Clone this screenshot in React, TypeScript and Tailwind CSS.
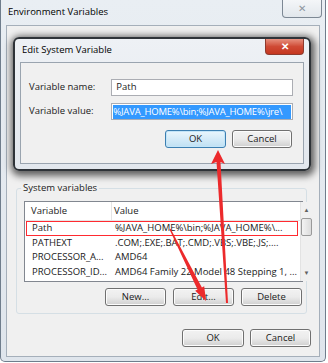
import React from "react";

const font = { fontFamily: '"Open Sans", "Noto Sans", Arial, sans-serif' };

const WinButton = ({ label, focused = false, w = "w-[61px]" }: { label: string; focused?: boolean; w?: string }) => (
  <div
    className={`${w} h-[18px] rounded-[3px] border flex items-center justify-center text-[9.5px] text-[#1a1a1a] ${
      focused
        ? "border-[#3c7fb1] bg-gradient-to-b from-[#eaf6fd] to-[#bfe0f3] shadow-[inset_0_0_0_1px_#c3e5f8]"
        : "border-[#707070] bg-gradient-to-b from-[#f2f2f2] via-[#ebebeb] to-[#cfcfcf] shadow-[inset_0_0_0_1px_#fcfcfc]"
    }`}
  >
    {label}
  </div>
);

const rows = [
  { name: "Path", value: "%JAVA_HOME%\\bin;%JAVA_HOME%\\...", marked: true },
  { name: "PATHEXT", value: ".COM;.EXE;.BAT;.CMD;.VBS;.VBE;.JS;...." },
  { name: "PROCESSOR_A...", value: "AMD64" },
  { name: "PROCESSOR_ID...", value: "AMD64 Family 22 Model 48 Stepping 1, ..." },
];

const Arrows = () => (
  <svg className="absolute inset-0 pointer-events-none" width="328" height="363" viewBox="0 0 328 363">
    {/* up arrow to the OK button */}
    <polygon points="218,150 225,164 220.5,162 228,303 226,303 216.5,162 211,164" fill="#ec2a2c" />
    {/* diagonal arrow to Edit... */}
    <polygon
      points="170.6,228.7 201.9,287.4 204.2,286.3 206,301 195.2,290.7 197.5,289.6 169.4,229.3"
      fill="#ec2a2c"
    />
  </svg>
);

export default function App() {
  return (
    <div className="relative w-[328px] h-[363px] overflow-hidden bg-white" style={font}>
      {/* Environment Variables window */}
      <div className="relative w-[326px] h-[362px] border-l border-r border-b border-[#6f7d8c] rounded-b-[5px] bg-gradient-to-b from-[#e9eef3] to-[#dfe5ec] flex flex-col px-[5px] pb-[4px]">
        <div className="h-[25px] flex items-center pl-[2px] text-[9.5px] text-black">Environment Variables</div>
        <div className="absolute top-0 right-[3px] w-[40px] h-[18px] border border-t-0 border-[#7d8894] rounded-b-[4px] bg-gradient-to-b from-[#f4f6f8] to-[#e2e7ec] flex items-center justify-center text-[10px] text-[#8d96a0]">
          ✕
        </div>

        <div className="flex-1 border border-[#a5afba] bg-[#f0f0f0] flex flex-col">
          {/* System variables group */}
          <div className="relative mt-[162px] ml-[9px] w-[291px] h-[126px] border border-[#d5dfe5] rounded-[3px] pt-[12px] pl-[7px]">
            <div className="absolute top-[-8px] left-[4px] bg-[#f0f0f0] px-[2px] text-[9.5px] text-[#1a1a1a] leading-[14px]">
              System variables
            </div>
            <div className="w-[279px] h-[81px] border border-[#828790] bg-white flex">
              <div className="flex-1 flex flex-col text-[9.5px] text-[#1a1a1a]">
                <div className="h-[19px] flex items-center border-b border-[#e5e5e5] shrink-0">
                  <div className="w-[87px] pl-[6px] border-r border-[#e5e5e5] h-full flex items-center">Variable</div>
                  <div className="pl-[2px]">Value</div>
                </div>
                {rows.map((r) => (
                  <div
                    key={r.name}
                    className={`h-[14.5px] flex items-center whitespace-nowrap ml-[1px] mr-[2px] border ${
                      r.marked ? "border-[#ff2a30]" : "border-transparent"
                    }`}
                  >
                    <div className="w-[86px] pl-[5px] shrink-0">{r.name}</div>
                    <div className="pl-[2px]">{r.value}</div>
                  </div>
                ))}
              </div>
              <div className="w-[13px] border-l border-[#e3e3e3] bg-[#f0f0f0] flex flex-col items-center">
                <div className="h-[16px] flex items-center justify-center text-[6px] text-[#606060]">▲</div>
                <div className="w-[11px] h-[18px] rounded-[2px] border border-[#9a9a9a] bg-gradient-to-r from-[#f3f3f3] to-[#dcdcdc]" />
                <div className="flex-1" />
                <div className="h-[16px] flex items-center justify-center text-[6px] text-[#606060]">▼</div>
              </div>
            </div>
            <div className="mt-[6px] flex justify-end gap-[7px] pr-[4px]">
              <WinButton label="New..." w="w-[61px]" />
              <WinButton label="Edit..." w="w-[61px]" />
              <WinButton label="Delete" w="w-[61px]" />
            </div>
          </div>

          <div className="mt-[15px] flex justify-end gap-[6px] pr-[8px]">
            <WinButton label="OK" w="w-[62px]" />
            <WinButton label="Cancel" w="w-[61px]" />
          </div>
        </div>
      </div>

      {/* Edit System Variable dialog */}
      <div className="absolute left-[13px] top-[37px] w-[298px] h-[134px] rounded-[6px] border-2 border-[#2e3338] bg-gradient-to-b from-[#eef1f5] to-[#e2e7ed] shadow-[1px_2px_7px_3px_rgba(0,0,0,0.6)] flex flex-col px-[5px]">
        <div className="h-[23px] flex items-center pl-[2px] text-[9.5px] text-black">Edit System Variable</div>
        <div className="absolute top-0 right-[5px] w-[39px] h-[16px] rounded-b-[4px] border border-t-0 border-[#8e3a2e] bg-gradient-to-b from-[#e6907f] via-[#cf4a35] to-[#c5361f] flex items-center justify-center text-[10px] font-bold text-white">
          ✕
        </div>
        <div className="h-[102px] border border-[#9aa4af] bg-[#f0f0f0] flex flex-col pl-[8px] pt-[16px] pr-[10px] text-[9.5px] text-[#1a1a1a]">
          <div className="flex items-center">
            <div className="w-[83px]">Variable name:</div>
            <div className="w-[183px] h-[17px] border border-[#abadb3] bg-white flex items-center pl-[4px]">Path</div>
          </div>
          <div className="flex items-center mt-[7px]">
            <div className="w-[83px]">Variable value:</div>
            <div className="w-[183px] h-[17px] border border-[#abadb3] bg-white flex items-center px-[1px]">
              <span className="bg-[#3399ff] text-white whitespace-nowrap leading-[14px] w-full tracking-[-0.2px]">
                %JAVA_HOME%\bin;%JAVA_HOME%\jre\
              </span>
            </div>
          </div>
          <div className="mt-[10px] flex justify-end gap-[6px] pr-[1px]">
            <WinButton label="OK" focused w="w-[61px]" />
            <WinButton label="Cancel" w="w-[60px]" />
          </div>
        </div>
      </div>

      <Arrows />
    </div>
  );
}
